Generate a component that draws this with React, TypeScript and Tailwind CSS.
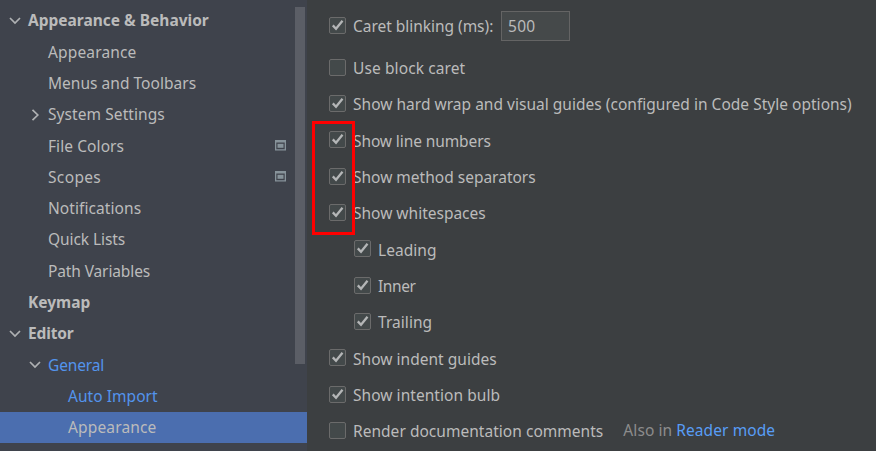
type Node = {
  label: string;
  level: 0 | 1 | 2;
  tracking?: string;
  arrow?: "down" | "right";
  bold?: boolean;
  modified?: boolean;
  project?: boolean;
  selected?: boolean;
};

const nodes: Node[] = [
  { label: "Appearance & Behavior", level: 0, arrow: "down", bold: true },
  { label: "Appearance", level: 1, tracking: "tracking-[0.15px]" },
  { label: "Menus and Toolbars", level: 1, tracking: "tracking-[0.03px]" },
  { label: "System Settings", level: 1, arrow: "right", tracking: "tracking-[0.08px]" },
  { label: "File Colors", level: 1, project: true, tracking: "tracking-[0.08px]" },
  { label: "Scopes", level: 1, project: true, tracking: "tracking-[0.35px]" },
  { label: "Notifications", level: 1, tracking: "tracking-[0.08px]" },
  { label: "Quick Lists", level: 1, tracking: "tracking-[-0.07px]" },
  { label: "Path Variables", level: 1, tracking: "tracking-[-0.12px]" },
  { label: "Keymap", level: 0, bold: true },
  { label: "Editor", level: 0, arrow: "down", bold: true, tracking: "tracking-[-0.15px]" },
  { label: "General", level: 1, arrow: "down", modified: true, tracking: "tracking-[-0.15px]" },
  { label: "Auto Import", level: 2, modified: true, tracking: "tracking-[0.05px]" },
  { label: "Appearance", level: 2, selected: true, tracking: "tracking-[0.15px]" },
];

type Option = { label: string; checked: boolean; tracking?: string; nested?: boolean; reader?: boolean };

const options: Option[] = [
  { label: "Use block caret", checked: false, tracking: "tracking-[0.1px]" },
  { label: "Show hard wrap and visual guides (configured in Code Style options)", checked: true, tracking: "tracking-[0.02px]" },
  { label: "Show line numbers", checked: true, tracking: "tracking-[-0.1px]" },
  { label: "Show method separators", checked: true },
  { label: "Show whitespaces", checked: true },
  { label: "Leading", checked: true, nested: true, tracking: "tracking-[0.05px]" },
  { label: "Inner", checked: true, nested: true, tracking: "tracking-[-0.4px]" },
  { label: "Trailing", checked: true, nested: true, tracking: "tracking-[0.05px]" },
  { label: "Show indent guides", checked: true, tracking: "tracking-[0.03px]" },
  { label: "Show intention bulb", checked: true, tracking: "tracking-[0.05px]" },
  { label: "Render documentation comments", checked: false, reader: true, tracking: "tracking-[0.03px]" },
];

const indents = ["w-[28px]", "w-[48px]", "w-[68px]"];

function Chevron({ direction }: { direction: "down" | "right" }) {
  return (
    <svg width="12" height="14" viewBox="0 0 12 14" fill="none" stroke="#afb1b3" strokeWidth="1.7">
      {direction === "down" ? <path d="M1 4 L6 9 L11 4" /> : <path d="M3.5 1.8 L8.8 7 L3.5 12.2" />}
    </svg>
  );
}

function ProjectIcon() {
  return (
    <svg width="11" height="11" viewBox="0 0 11 11" className="mb-px ml-auto mr-[21px]">
      <path fill="#87939a" fillRule="evenodd" d="M0 0H11V10.5H0Z M1.3 2.4V9.2H9.7V2.4Z" />
      <rect x="2.5" y="3.8" width="6" height="4" fill="#87939a" />
    </svg>
  );
}

function TreeRow({ node }: { node: Node }) {
  const color = node.modified ? "text-[#5394ec]" : "text-[#bbbbbb]";
  return (
    <div className={`flex h-[31.3px] shrink-0 items-center ${node.selected ? "bg-[#4b6eaf]" : ""}`}>
      <span className={`flex shrink-0 justify-end pr-[7px] ${indents[node.level]}`}>
        {node.arrow && <Chevron direction={node.arrow} />}
      </span>
      <span className={`whitespace-nowrap pb-[0.6px] ${color} ${node.bold ? "font-bold" : ""} ${node.tracking ?? ""}`}>{node.label}</span>
      {node.project && <ProjectIcon />}
    </div>
  );
}

function Checkbox({ checked }: { checked: boolean }) {
  return (
    <span className="mb-px flex size-[17px] shrink-0 items-center justify-center rounded-[2px] border border-[#6b6b6b] bg-[#43494a]">
      {checked && (
        <svg width="15" height="15" viewBox="0 0 15 15" fill="none" stroke="#b4b6b7" strokeWidth="2.3">
          <path d="M2.8 7.4 L6 10.8 L12.5 2.8" />
        </svg>
      )}
    </span>
  );
}

export default function App() {
  return (
    <div className="relative flex h-[451px] w-[876px] overflow-hidden bg-[#3c3f41] font-['Noto_Sans','Open_Sans',sans-serif] text-[15.5px] leading-[22px] text-[#bbbbbb]">
      <nav className="flex w-[307px] shrink-0 bg-[#3f434c]">
        <div className="relative flex w-full flex-col pt-[5px]">
          {nodes.map((node, i) => (
            <TreeRow key={i} node={node} />
          ))}
          <div className="absolute right-[2px] top-[7px] h-[357px] w-[10px] bg-[#5b5e66]" />
        </div>
      </nav>

      <main className="flex min-w-0 flex-1 flex-col pl-[22px]">
        <div className="flex h-[49.5px] shrink-0 items-center pt-[2.7px]">
          <Checkbox checked />
          <span className="ml-[7px] w-[148px] whitespace-nowrap pt-[0.6px] tracking-[-0.03px]">Caret blinking (ms):</span>
          <span className="flex h-[30px] w-[69px] items-center border border-[#646464] bg-[#45494a] pb-px pl-[6px] tracking-[0.3px]">500</span>
        </div>
        {options.map((option) => (
          <div key={option.label} className={`flex h-[36.35px] shrink-0 items-center ${option.nested ? "pl-[25px]" : ""}`}>
            <Checkbox checked={option.checked} />
            <span className={`ml-[7px] whitespace-nowrap pt-[0.6px] ${option.tracking ?? ""}`}>{option.label}</span>
            {option.reader && (
              <span className="ml-[20px] whitespace-nowrap pb-[2px] tracking-[0.08px] text-[#8c8c8c]">
                Also in <span className="text-[#589df6]">Reader mode</span>
              </span>
            )}
          </div>
        ))}
      </main>

      <div className="absolute left-[312px] top-[121px] h-[114px] w-[43px] border-[3px] border-[#ff0000]" />
    </div>
  );
}
